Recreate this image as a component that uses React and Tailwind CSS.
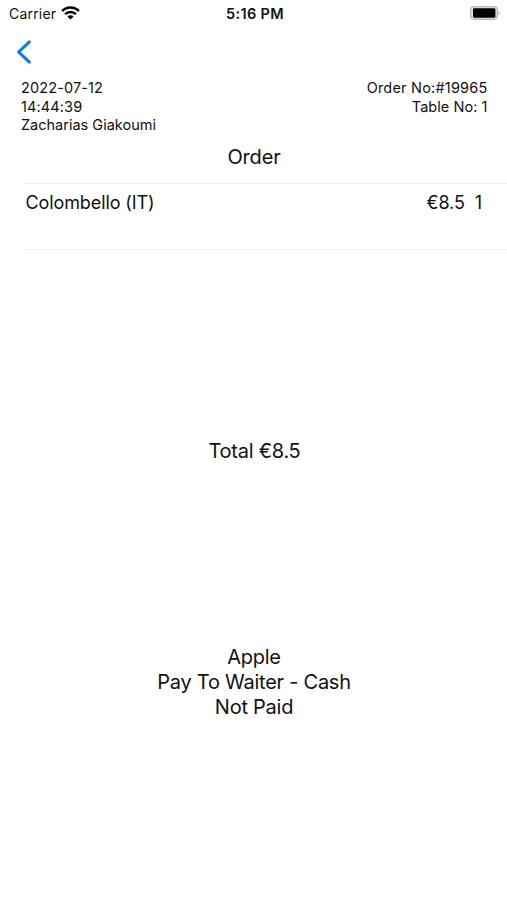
function StatusBar() {
  return (
    <div className="grid grid-cols-3 items-center h-[27px] pl-[9px] pr-1.5">
      <div className="flex items-center gap-[5px]">
        <span className="text-[14px] tracking-[0.2px]">Carrier</span>
        <svg className="-mt-0.5" width="19" height="14" viewBox="0 0 19 14">
          <g fill="none" stroke="#000" strokeWidth="2.5">
            <path d="M1.1 5a11.9 11.9 0 0 1 16.8 0" />
            <path d="M4.1 8.2a7.6 7.6 0 0 1 10.8 0" />
          </g>
          <path d="M9.5 13.6 6.4 10.6a4.4 4.4 0 0 1 6.2 0z" />
        </svg>
      </div>
      <span className="text-center text-[14.5px] font-semibold tracking-[0.35px] whitespace-nowrap">
        5:16 PM
      </span>
      <svg className="justify-self-end -mt-px" width="31" height="14" viewBox="0 0 31 14">
        <rect x="0.7" y="0.7" width="26.6" height="12.6" rx="3.5" fill="#e4e4e4" stroke="#b5b5b5" strokeWidth="1.2" />
        <rect x="3" y="2.2" width="22.4" height="9.6" rx="1.3" />
        <path d="M28.4 4.8v4.4c1.8-.7 1.8-3.7 0-4.4z" fill="#b5b5b5" />
      </svg>
    </div>
  );
}

const orderItems = [{ name: "Colombello (IT)", price: "€8.5", quantity: 1 }];

function App() {
  return (
    <div className="flex flex-col h-[900px] bg-white text-[#111] font-[Inter,sans-serif] overflow-hidden">
      <StatusBar />

      {/* Back button */}
      <button className="w-10 h-[52px] pl-4 pb-0.5" aria-label="Back">
        <svg width="16" height="26" viewBox="0 0 16 26" fill="none">
          <path
            d="M13.4 2.9 2.6 13l10.8 10.1"
            stroke="#007aff"
            strokeWidth="3"
            strokeLinecap="round"
            strokeLinejoin="round"
          />
        </svg>
      </button>

      <div className="flex justify-between pl-[21px] pr-[19.5px] text-[14.5px] leading-[18.7px]">
        <div>
          <p className="tracking-[0.12px]">2022-07-12</p>
          <p className="tracking-[0.12px]">14:44:39</p>
          <p>Zacharias Giakoumi</p>
        </div>
        <div className="text-right">
          <p className="tracking-[0.2px]">Order No:#19965</p>
          <p className="tracking-[0.05px]">Table No: 1</p>
        </div>
      </div>

      <h1 className="mt-[9px] h-[39px] pl-px text-center text-[20px] leading-[26px] tracking-[-0.15px]">
        Order
      </h1>

      <div className="ml-[25px] border-t border-[#ebebeb]">
        {orderItems.map((item) => (
          <div
            key={item.name}
            className="flex justify-between h-[66px] pt-1.5 pl-[0.5px] pr-[25px] border-b border-[#ebebeb] text-[18px] leading-[26px] tracking-[-0.1px]"
          >
            <span>{item.name}</span>
            <span className="flex gap-2.5">
              <span>{item.price}</span>
              <span>{item.quantity}</span>
            </span>
          </div>
        ))}
      </div>

      <p className="mt-[188px] pl-0.5 text-center text-[20px] leading-[26px] tracking-[-0.25px]">
        Total €8.5
      </p>

      <div className="mt-[181px] pl-px text-center text-[20px] leading-[25px] tracking-[-0.25px]">
        <p>Apple</p>
        <p>Pay To Waiter - Cash</p>
        <p>Not Paid</p>
      </div>
    </div>
  );
}

export default App;
